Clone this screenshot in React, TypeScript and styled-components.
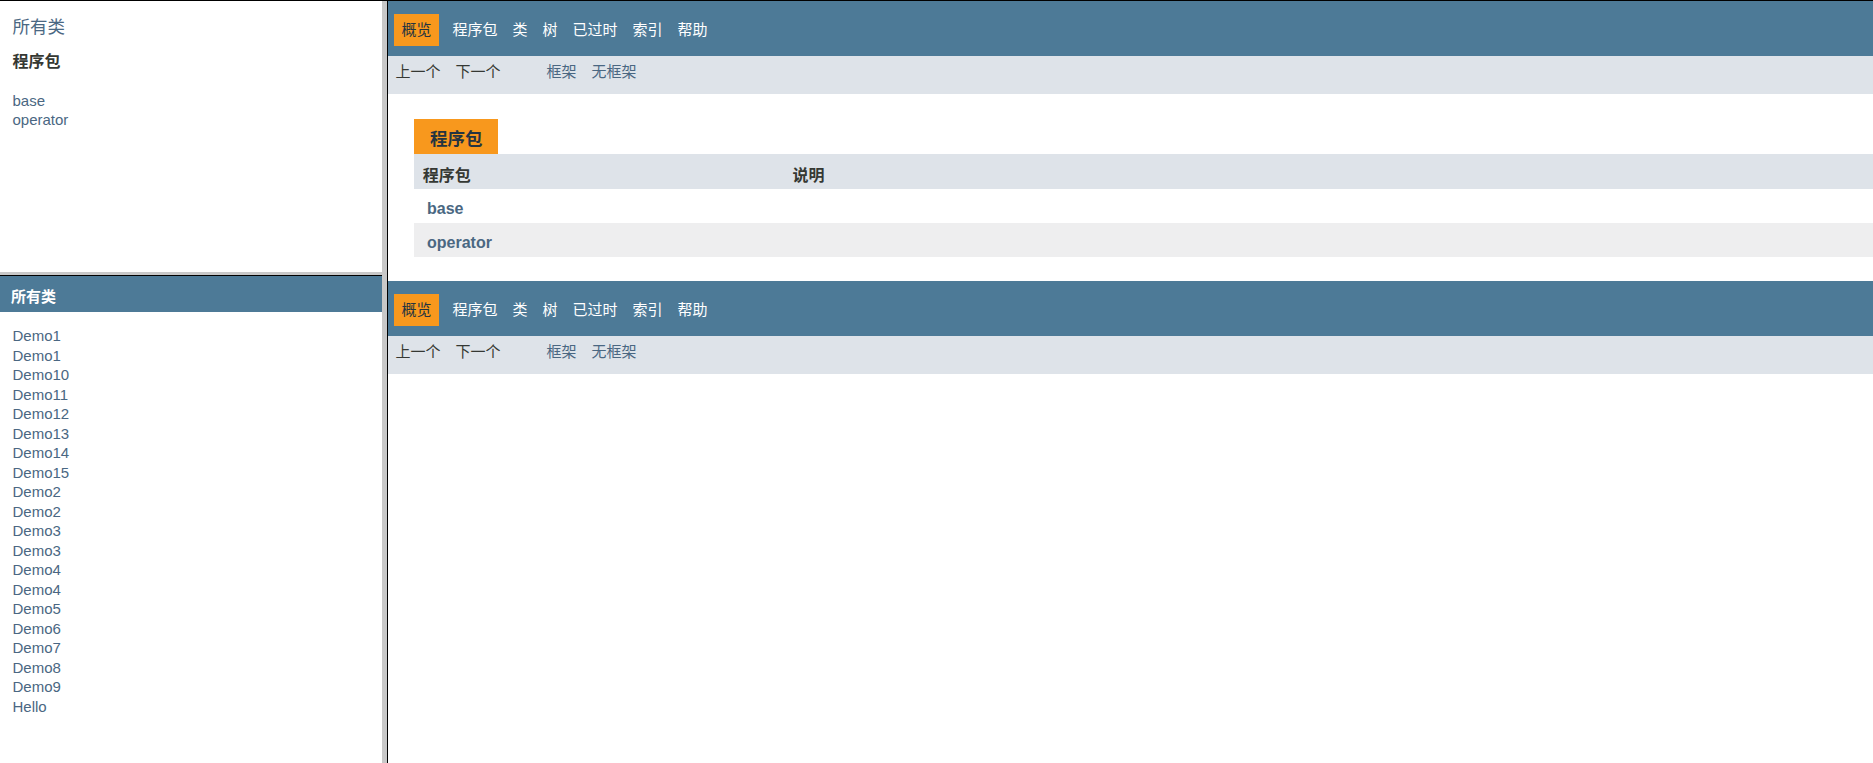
import React from 'react';
import styled, { createGlobalStyle } from 'styled-components';

const GlobalStyle = createGlobalStyle`
  html, body {
    margin: 0;
    padding: 0;
    height: 763px;
    overflow: hidden;
    background: #ffffff;
  }
  body {
    font-family: "Liberation Sans", "Noto Sans CJK SC", sans-serif;
    color: #353833;
  }
`;

const Page = styled.div`
  display: flex;
  height: 763px;
  border-top: 1px solid #000000;
  box-sizing: border-box;
`;

const LeftColumn = styled.div`
  width: 382px;
  display: flex;
  flex-direction: column;
  flex-shrink: 0;
`;

const PackagesPane = styled.div`
  height: 271px;
  padding: 0 12.5px;
  box-sizing: border-box;
  overflow: hidden;
  background: #ffffff;
`;

const PaneSplit = styled.div`
  height: 0;
  border-top: 3px solid #c8c8c8;
  border-bottom: 1px solid #000000;
`;

const ClassesPane = styled.div`
  flex: 1;
  overflow: hidden;
  background: #ffffff;
`;

const ColumnSplit = styled.div`
  width: 5px;
  flex-shrink: 0;
  background: #c8c8c8;
`;

const RightFrame = styled.div`
  flex: 1;
  min-width: 0;
  border-left: 1px solid #000000;
  overflow: hidden;
  background: #ffffff;
`;

const IndexHeader = styled.div`
  padding-top: 15px;
  font-size: 17.5px;
  line-height: 22px;
`;

const Link = styled.a<{ $bold?: boolean }>`
  color: #4a6782;
  text-decoration: none;
  font-weight: ${(p) => (p.$bold ? 'bold' : 'normal')};
`;

const PaneHeading = styled.h2`
  margin: 14px 0 0;
  font-size: 16px;
  line-height: 20px;
  font-weight: bold;
  color: #353833;
`;

const IndexList = styled.ul<{ $top: number; $indent?: number }>`
  list-style: none;
  margin: ${(p) => p.$top}px 0 0;
  padding: 0 0 0 ${(p) => p.$indent ?? 0}px;
`;

const IndexItem = styled.li`
  padding-top: 2.5px;
  font-size: 15px;
  line-height: 17px;
  white-space: nowrap;
`;

const FrameBar = styled.h1`
  margin: 0;
  background: #4d7a97;
  color: #ffffff;
  font-size: 15px;
  line-height: 20px;
  font-weight: bold;
  padding: 11px 0 5px 11px;
`;

const TopNav = styled.div`
  background: #4d7a97;
  height: 55px;
  padding-top: 13px;
  box-sizing: border-box;
`;

const NavList = styled.ul`
  display: flex;
  margin: 0;
  padding: 0;
  list-style: none;
`;

const NavItem = styled.li<{ $active?: boolean }>`
  padding: 6px 7.5px;
  margin: ${(p) => (p.$active ? '0 6px' : '0')};
  font-size: 15px;
  line-height: 20px;
  white-space: nowrap;
  color: ${(p) => (p.$active ? '#253441' : '#ffffff')};
  background: ${(p) => (p.$active ? '#f8981d' : 'transparent')};
`;

const SubNav = styled.div`
  display: flex;
  background: #dee3e9;
  height: 38px;
`;

const SubNavList = styled.ul<{ $gap?: number }>`
  display: flex;
  margin: 0 ${(p) => p.$gap ?? 0}px 0 0;
  padding: 0;
  list-style: none;
`;

const SubNavItem = styled.li<{ $link?: boolean }>`
  padding: 6px 7.5px;
  font-size: 15px;
  line-height: 20px;
  white-space: nowrap;
  color: ${(p) => (p.$link ? '#4a6782' : '#353833')};
`;

const Content = styled.div`
  padding: 25px 0 24px 26px;
`;

const Caption = styled.span`
  display: inline-block;
  vertical-align: top;
  background: #f8981d;
  color: #253441;
  font-size: 17.5px;
  line-height: 20px;
  font-weight: bold;
  padding: 10px 15px 5px 16px;
`;

const SummaryTable = styled.table`
  width: 100%;
  border-collapse: collapse;
  border-spacing: 0;
`;

const HeadCell = styled.th<{ $first?: boolean }>`
  background: #dee3e9;
  text-align: left;
  font-size: 16px;
  line-height: 20px;
  font-weight: bold;
  color: #353833;
  padding: 12px 3px 3px 8.7px;
  width: ${(p) => (p.$first ? '358px' : 'auto')};
`;

const Row = styled.tr<{ $alt?: boolean }>`
  background: ${(p) => (p.$alt ? '#eeeeef' : '#ffffff')};
`;

const Cell = styled.td`
  padding: 10px 3px 4px 13px;
  font-size: 16px;
  line-height: 20px;
`;

const navItems = ['概览', '程序包', '类', '树', '已过时', '索引', '帮助'];

const classes = [
  'Demo1', 'Demo1', 'Demo10', 'Demo11', 'Demo12', 'Demo13', 'Demo14', 'Demo15',
  'Demo2', 'Demo2', 'Demo3', 'Demo3', 'Demo4', 'Demo4', 'Demo5', 'Demo6',
  'Demo7', 'Demo8', 'Demo9', 'Hello',
];

const packages = ['base', 'operator'];

function NavBlock() {
  return (
    <>
      <TopNav>
        <NavList>
          {navItems.map((n, i) => (
            <NavItem key={n} $active={i === 0}>
              {n}
            </NavItem>
          ))}
        </NavList>
      </TopNav>
      <SubNav>
        <SubNavList $gap={31}>
          <SubNavItem>上一个</SubNavItem>
          <SubNavItem>下一个</SubNavItem>
        </SubNavList>
        <SubNavList>
          <SubNavItem $link>框架</SubNavItem>
          <SubNavItem $link>无框架</SubNavItem>
        </SubNavList>
      </SubNav>
    </>
  );
}

export default function App() {
  return (
    <>
      <GlobalStyle />
      <Page>
        <LeftColumn>
          <PackagesPane>
            <IndexHeader>
              <Link href="#">所有类</Link>
            </IndexHeader>
            <PaneHeading>程序包</PaneHeading>
            <IndexList $top={17}>
              {packages.map((p) => (
                <IndexItem key={p}>
                  <Link href="#">{p}</Link>
                </IndexItem>
              ))}
            </IndexList>
          </PackagesPane>
          <PaneSplit />
          <ClassesPane>
            <FrameBar>所有类</FrameBar>
            <IndexList $top={12.5} $indent={12.5}>
              {classes.map((c, i) => (
                <IndexItem key={i}>
                  <Link href="#">{c}</Link>
                </IndexItem>
              ))}
            </IndexList>
          </ClassesPane>
        </LeftColumn>
        <ColumnSplit />
        <RightFrame>
          <NavBlock />
          <Content>
            <Caption>程序包</Caption>
            <SummaryTable>
              <thead>
                <tr>
                  <HeadCell $first>程序包</HeadCell>
                  <HeadCell>说明</HeadCell>
                </tr>
              </thead>
              <tbody>
                {packages.map((p, i) => (
                  <Row key={p} $alt={i % 2 === 1}>
                    <Cell>
                      <Link href="#" $bold>
                        {p}
                      </Link>
                    </Cell>
                    <Cell />
                  </Row>
                ))}
              </tbody>
            </SummaryTable>
          </Content>
          <NavBlock />
        </RightFrame>
      </Page>
    </>
  );
}
